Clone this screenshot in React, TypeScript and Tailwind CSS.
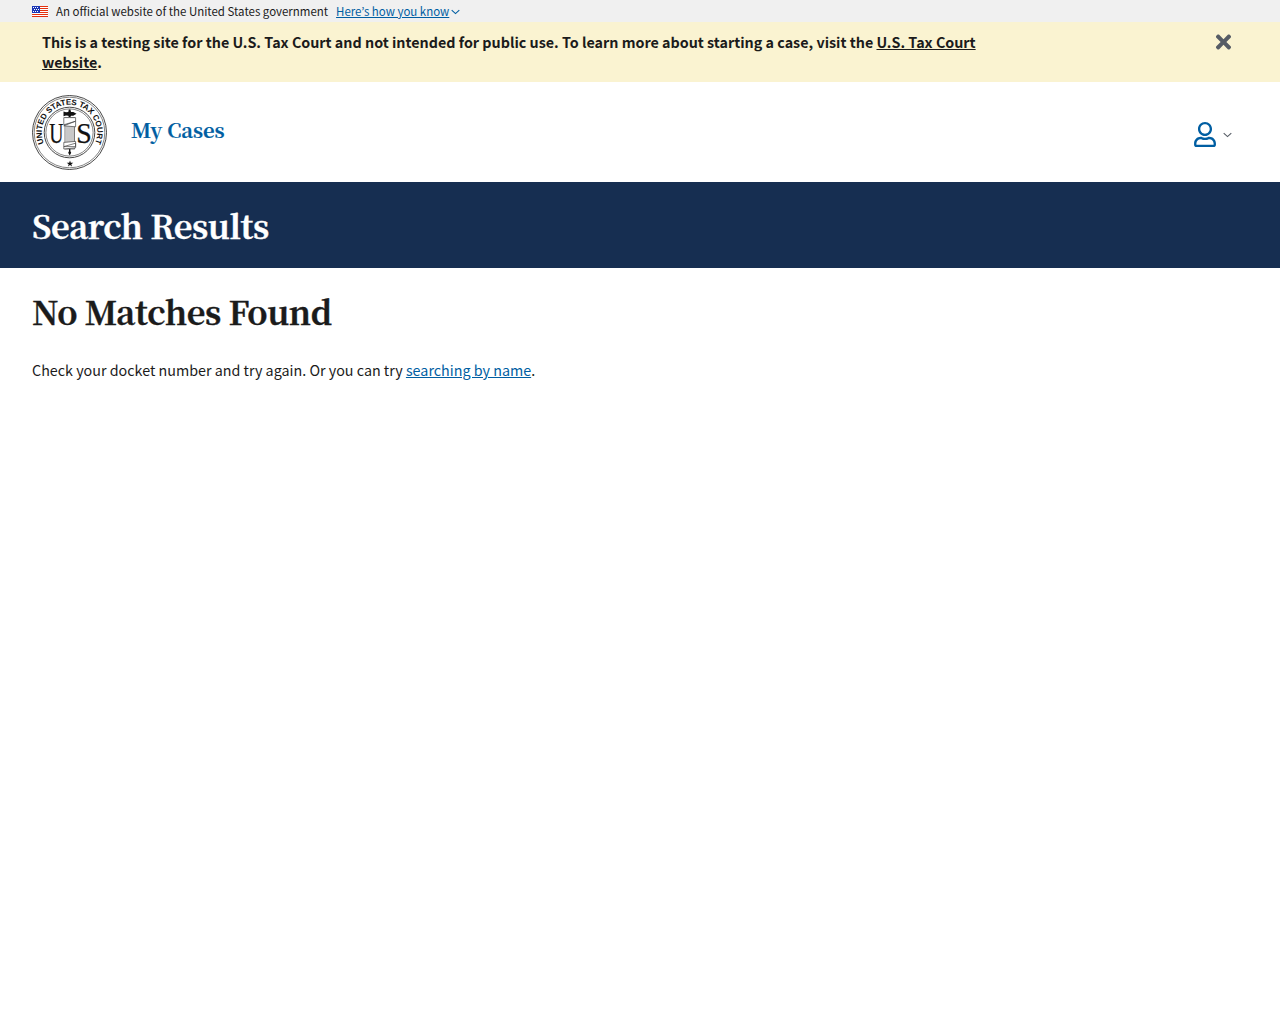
import { FaRegUser, FaTimes } from "react-icons/fa";

const sans = "font-['Noto_Sans_CJK_KR','Noto_Sans',sans-serif]";
const serif = "font-['Noto_Serif_CJK_SC','Liberation_Serif',serif]";

function Flag() {
  return (
    <svg width="16" height="11" viewBox="0 0 16 11" shapeRendering="crispEdges" className="mt-px block shrink-0">
      <rect width="16" height="11" fill="#fff" />
      {[0, 2, 4, 6, 8, 10].map((y) => (
        <rect key={y} y={y} width="16" height="1" fill="#e4300d" />
      ))}
      <rect width="8" height="7" fill="#1b36b6" />
      {[1, 3, 5].map((y) =>
        [1, 3, 5].map((x) => <rect key={`${x}-${y}`} x={x + (y === 3 ? 1 : 0)} y={y} width="1" height="1" fill="#fff" />)
      )}
    </svg>
  );
}

function Chevron({ className }: { className: string }) {
  return (
    <svg width="9" height="6" viewBox="0 0 9 6" fill="none" stroke="currentColor" strokeWidth="1.1" className={className}>
      <path d="M0.7 1.1 4.5 4.6 8.3 1.1" />
    </svg>
  );
}

function Seal() {
  return (
    <svg width="75" height="75" viewBox="0 0 75 75" className="block shrink-0">
      <defs>
        <path id="seal-ring" d="M12 48.3A27.7 27.7 0 1 1 63 48.3" />
      </defs>
      <g fill="none" stroke="#333">
        <circle cx="37.5" cy="37.5" r="37" strokeWidth="0.9" />
        <circle cx="37.5" cy="37.5" r="35.3" strokeWidth="0.6" />
        <circle cx="37.5" cy="37.5" r="25.3" strokeWidth="0.9" />
        <circle cx="37.5" cy="37.5" r="23.6" strokeWidth="0.6" />
      </g>
      <text className="font-['Liberation_Sans',sans-serif]" fontSize="8" fontWeight="700" fill="#111">
        <textPath href="#seal-ring" textLength="109">UNITED STATES TAX COURT</textPath>
      </text>
      <g className="font-['Liberation_Serif',serif]" fontSize="29" fill="#111" stroke="#111" strokeWidth="0.25">
        <text x="17.2" y="48" textLength="14.2" lengthAdjust="spacingAndGlyphs">U</text>
        <text x="44.2" y="48" textLength="15.5" lengthAdjust="spacingAndGlyphs">S</text>
      </g>
      <path d="M31.5 16.5 34 17.3l2.3-.3.5-2.5h1.6l.6 2.5h2.3l3.2 1.8-3.2 1.9H39l-.6 1.3h-1.6l-.5-1.3-2.3-.3-2.5.9z" fill="#111" />
      <path d="M37 54h1.4v2.3l.8 1.4-.8 1.6-.7 1.2-.7-1.2-.8-1.6.8-1.4z" fill="#111" />
      <rect x="33" y="22.5" width="9.4" height="31.5" fill="#fff" stroke="#444" strokeWidth="0.7" />
      <path d="M35 22.5V54M37 22.5V54M39 22.5V54M41 22.5V54" stroke="#777" strokeWidth="0.8" />
      <path d="M31.8 22.6h11.8v3.6l-11.8 3.6zM43.6 26.2v5.6l-11.8-1zM31.8 47.4l11.8-1v5.2h-11.8zM31.8 51.6l11.8-3.4v4.6l-11.8 1.2z" fill="#fff" stroke="#444" strokeWidth="0.7" />
      <path d="m38 65.5.8 2.3h2.5l-2 1.4.8 2.4-2.1-1.5-2.1 1.5.8-2.4-2-1.4h2.5z" fill="#111" />
    </svg>
  );
}

export default function App() {
  return (
    <div className={`min-h-screen bg-white text-[#1b1b1b] ${sans}`}>
      <section className="flex h-[22px] items-center bg-[#f0f0f0] px-8 text-[11.47px] leading-[16px]">
        <Flag />
        <p className="ml-2 whitespace-nowrap">An official website of the United States government</p>
        <button className="ml-2 flex items-center text-[#005ea2]">
          <span className="underline underline-offset-[1px]">Here’s how you know</span>
          <Chevron className="ml-[1.5px] mt-[2px]" />
        </button>
      </section>
      <section className="flex h-[60px] items-start justify-between bg-[#faf3d1] pl-[42px] pr-12 pt-[10px]">
        <p className="w-[960px] text-[14.32px] font-bold leading-[20px]">
          This is a testing site for the U.S. Tax Court and not intended for public use. To learn more about starting a case, visit the{" "}
          <a className="underline underline-offset-[1px]">U.S. Tax Court<br />website</a>.
        </p>
        <button aria-label="Close" className="text-[#565c65]">
          <FaTimes className="-mt-[1.5px] h-[22px] w-[17px]" />
        </button>
      </section>
      <header className="flex h-[100px] items-start justify-between pl-8 pr-12 pt-[13px]">
        <div className="flex items-start">
          <Seal />
          <a className={`ml-6 mt-[21px] text-[20.2px] font-bold leading-[28px] tracking-[-0.08px] text-[#005ea2] [-webkit-text-stroke:0.2px_#005ea2] ${serif}`}>
            My Cases
          </a>
        </div>
        <button aria-label="Account" className="mt-[27px] flex items-center">
          <FaRegUser className="h-[25px] w-[22px] text-[#005ea2]" />
          <Chevron className="ml-[7px] text-[#565c65]" />
        </button>
      </header>
      <section className="h-[86px] bg-[#162e51] px-8 pt-5">
        <h1 className={`text-[32.6px] font-bold leading-[45px] tracking-[-0.4px] text-white [-webkit-text-stroke:0.4px_#fff] ${serif}`}>
          Search Results
        </h1>
      </section>
      <main className="px-8 pt-5">
        <h2 className={`text-[32.6px] font-bold leading-[45px] tracking-[-0.4px] [-webkit-text-stroke:0.4px_#1b1b1b] ${serif}`}>
          No Matches Found
        </h2>
        <p className="mt-[25px] text-[14.32px] leading-[24px]">
          Check your docket number and try again. Or you can try{" "}
          <a className="text-[#005ea2] underline underline-offset-[1px]">searching by name</a>.
        </p>
      </main>
    </div>
  );
}
